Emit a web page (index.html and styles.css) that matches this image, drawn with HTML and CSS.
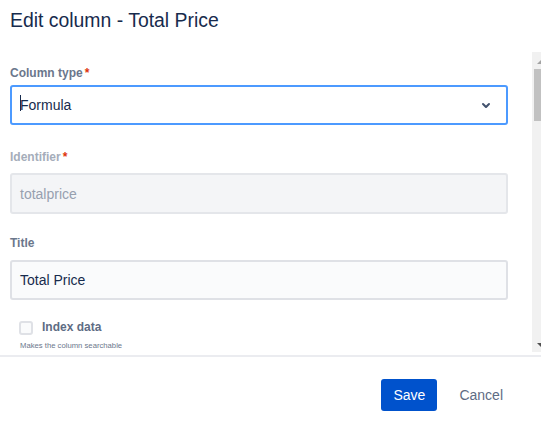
FILE: index.html
```html
<!DOCTYPE html>
<html>
<head>
<meta charset="utf-8">
<link rel="stylesheet" href="styles.css">
</head>
<body>
<div class="dialog">
  <div class="header">
    <h1 class="title">Edit column - Total Price</h1>
  </div>
  <div class="body">
    <div class="content">
      <div class="label first">Column type<span class="req">*</span></div>
      <div class="select">
        <span class="value">Formula</span>
        <svg class="chev" width="24" height="24" viewBox="0 0 24 24"><path fill="#42526e" d="M8.292 10.293a1.009 1.009 0 0 0 0 1.419l2.939 2.965c.218.215.5.322.779.322s.556-.107.769-.322l2.93-2.955a1.01 1.01 0 0 0 0-1.419.987.987 0 0 0-1.406 0l-2.298 2.317-2.307-2.327a.99.99 0 0 0-1.406 0z"/></svg>
      </div>
      <div class="label disabled second">Identifier<span class="req">*</span></div>
      <div class="input input-disabled">totalprice</div>
      <div class="label third">Title</div>
      <div class="input input-normal">Total Price</div>
      <div class="check-row">
        <span class="checkbox"></span>
        <span class="check-label">Index data</span>
      </div>
      <div class="help">Makes the column searchable</div>
    </div>
    <div class="scrollbar">
      <div class="arrow-up-area"><span class="arrow-up"></span></div>
      <div class="thumb"></div>
      <div class="track-fill"></div>
      <div class="arrow-down-area"><span class="arrow-down"></span></div>
    </div>
  </div>
  <div class="footer">
    <button class="btn btn-primary">Save</button>
    <button class="btn btn-subtle">Cancel</button>
  </div>
</div>
</body>
</html>
```
FILE: styles.css
```css
html, body {
  margin: 0;
  padding: 0;
  background: #ffffff;
}
body {
  font-family: "Liberation Sans", Arial, sans-serif;
  color: #172b4d;
}
.dialog {
  width: 541px;
  height: 433px;
  overflow: hidden;
  display: flex;
  flex-direction: column;
}
.header {
  height: 52px;
  padding: 8px 0 0 10px;
  box-sizing: border-box;
  flex: none;
}
.title {
  margin: 0;
  font-size: 19.4px;
  line-height: 24px;
  font-weight: normal;
  color: #172b4d;
}
.body {
  height: 300px;
  flex: none;
  display: flex;
  width: 549px;
}
.content {
  width: 532px;
  box-sizing: border-box;
  padding: 13px 24px 0 10px;
  overflow: hidden;
}
.label {
  font-size: 12px;
  line-height: 16px;
  font-weight: bold;
  color: #6b778c;
}
.label.first { margin-bottom: 4px; }
.label.second { margin-top: 24px; margin-bottom: 8px; }
.label.third { margin-top: 21px; margin-bottom: 9px; }
.label.disabled { color: #a5adba; }
.req {
  color: #de350b;
  margin-left: 2px;
}
.select {
  height: 40px;
  box-sizing: border-box;
  border: 2px solid #4c9aff;
  border-radius: 3px;
  background: #ffffff;
  display: flex;
  align-items: center;
  padding: 0 8px 0 8px;
  position: relative;
}
.value {
  flex: 1;
  font-size: 14px;
  color: #172b4d;
  position: relative;
  padding-left: 0;
}
.value::before {
  content: "";
  position: absolute;
  left: 0;
  top: -2px;
  width: 1px;
  height: 16px;
  background: #172b4d;
}
.chev {
  display: block;
  flex: none;
}
.input {
  height: 40px;
  box-sizing: border-box;
  border: 2px solid #dfe1e6;
  border-radius: 3px;
  padding: 0 8px;
  display: flex;
  align-items: center;
  font-size: 14px;
}
.input-disabled {
  background: #f4f5f7;
  border-color: #e4e6ea;
  color: #97a0af;
  height: 41px;
}
.input-normal {
  background: #fafbfc;
  color: #172b4d;
}
.check-row {
  display: flex;
  align-items: center;
  margin-top: 21px;
  margin-left: 9px;
  height: 14px;
}
.checkbox {
  width: 14px;
  height: 14px;
  box-sizing: border-box;
  border: 2px solid #dfe1e6;
  border-radius: 3px;
  background: #fafbfc;
  flex: none;
}
.check-label {
  margin-left: 9px;
  font-size: 12px;
  font-weight: bold;
  color: #5e6c84;
  line-height: 14px;
  position: relative;
  top: -1px;
}
.help {
  margin-left: 10px;
  margin-top: 6px;
  font-size: 7.7px;
  line-height: 10px;
  color: #6b778c;
}
.scrollbar {
  width: 17px;
  flex: none;
  background: #f1f1f1;
  display: flex;
  flex-direction: column;
}
.arrow-up-area, .arrow-down-area {
  height: 17px;
  flex: none;
  display: flex;
  justify-content: center;
  align-items: center;
}
.arrow-up {
  width: 0;
  height: 0;
  border-left: 4px solid transparent;
  border-right: 4px solid transparent;
  border-bottom: 4px solid #a3a3a3;
  margin-top: 2px;
}
.arrow-down {
  width: 0;
  height: 0;
  border-left: 4px solid transparent;
  border-right: 4px solid transparent;
  border-top: 4px solid #505050;
  margin-top: 2px;
}
.thumb {
  height: 52px;
  margin: 0 2px;
  background: #c1c1c1;
  flex: none;
}
.track-fill {
  flex: 1;
}
.footer {
  margin-top: 3px;
  border-top: 2px solid #ebecf0;
  flex: 1;
  display: flex;
  justify-content: flex-end;
  align-items: flex-start;
  padding: 22px 26px 0 0;
  gap: 10px;
}
.btn {
  height: 32px;
  border: none;
  border-radius: 3px;
  padding: 0 12px;
  font-family: "Liberation Sans", Arial, sans-serif;
  font-size: 14px;
  line-height: 32px;
  margin: 0;
  cursor: pointer;
}
.btn-primary {
  background: #0052cc;
  color: #ffffff;
  width: 56px;
}
.btn-subtle {
  background: transparent;
  color: #5e6c84;
}
```
